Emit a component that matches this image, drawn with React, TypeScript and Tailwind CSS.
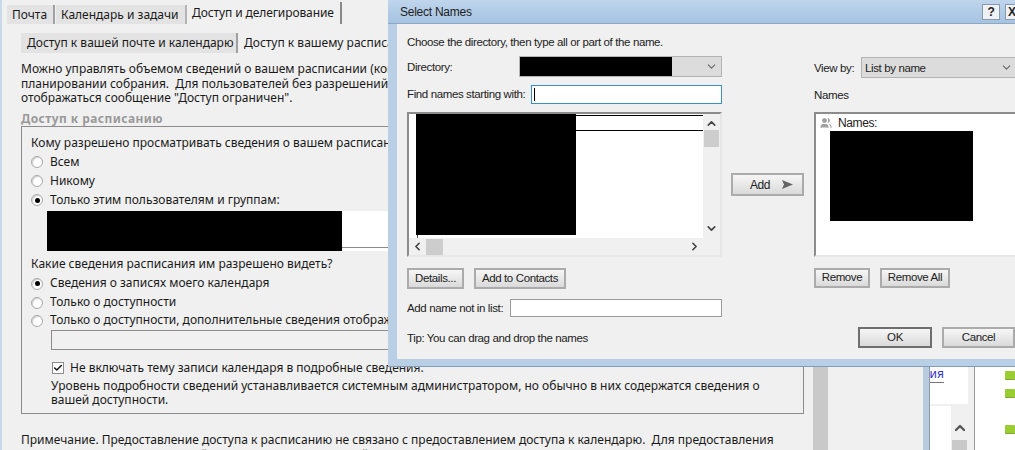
import { Check, ChevronDown, ChevronLeft, ChevronRight, ChevronUp, Users } from 'lucide-react';

const tahoma = "font-['Noto_Sans',sans-serif] text-[12px] leading-[14.5px] text-[#1a1a1a]";
const btnFrame = 'flex items-center justify-center border-2 border-[#ababab] bg-gradient-to-b from-[#f6f6f6] to-[#dadada] text-[#222]';
const dlgBtn = `h-[21px] ${btnFrame}`;
const clipGroup = 'w-[357px] overflow-hidden';
const clipTop = 'w-[367px] overflow-hidden';

function Radio({ on = false }: { on?: boolean }) {
    return (
        <span className="w-[12px] h-[12px] shrink-0 rounded-full border border-[#a8a8a8] bg-white shadow-[inset_1px_1px_1px_#cfcfcf] flex items-center justify-center">
            {on && <span className="w-[5px] h-[5px] rounded-full bg-black" />}
        </span>
    );
}

function RadioRow({ label, on, className }: { label: string; on?: boolean; className: string }) {
    return (
        <div className={`flex items-center gap-[7px] whitespace-nowrap ${clipGroup} ${className}`}>
            <Radio on={on} />
            <span>{label}</span>
        </div>
    );
}

function OptionsPane() {
    return (
        <div className={`w-[813px] h-[450px] shrink-0 overflow-hidden border-l-2 border-[#c9d9ea] ${tahoma}`}>
            {/* Outer tabs */}
            <div className="flex items-end h-[24px] pl-[5px] whitespace-nowrap">
                <div className="h-[19px] w-[48px] pl-[5px] bg-[#e3e3e3] border-r-2 border-[#a0a0a0] leading-[19px]">Почта</div>
                <div className="h-[19px] w-[131px] pl-[5px] ml-[1px] bg-[#e3e3e3] border-r-2 border-[#b4b4b4] leading-[19px]">Календарь и задачи</div>
                <div className="h-[22px] w-[155px] pl-[5px] leading-[22px] border-r-2 border-[#8a8a8a] tracking-[-0.1px]">Доступ и делегирование</div>
            </div>
            {/* Inner tabs */}
            <div className={`flex mt-[9px] ml-[19px] h-[20px] whitespace-nowrap ${clipTop}`}>
                <div className="w-[217px] shrink-0 pl-[6px] bg-[#e3e3e3] border-r-2 border-[#a0a0a0] leading-[20px]">Доступ к вашей почте и календарю</div>
                <div className="pl-[6px] leading-[20px]">Доступ к вашему расписанию</div>
            </div>
            <div className="ml-[19px] mt-[9px] whitespace-pre">
                <p className={clipTop}>Можно управлять объемом сведений о вашем расписании (когда вы заняты или свободны), которые видят другие при</p>
                <p className={clipTop}>планировании собрания.  Для пользователей без разрешений просмотра вашего расписания будет</p>
                <p className={clipTop}>отображаться сообщение "Доступ ограничен".</p>
            </div>
            <div className="ml-[19px] mt-[6px] font-bold text-[#9a9a9a] tracking-[0.42px]">Доступ к расписанию</div>
            {/* Group box */}
            <div className="ml-[19px] w-[783px] h-[288px] border border-[#8c8c8c] pl-[9px] pt-[9px] whitespace-nowrap">
                <p className={clipGroup}>Кому разрешено просматривать сведения о вашем расписании:</p>
                <RadioRow label="Всем" className="mt-[4px] h-[15px]" />
                <RadioRow label="Никому" className="mt-[4px] h-[15px]" />
                <RadioRow label="Только этим пользователям и группам:" on className="mt-[4px] h-[15px]" />
                <div className="flex mt-[3px] ml-[16px] w-[341px] h-[40px] bg-white">
                    <div className="w-[295px] bg-black" />
                    <div className="flex-1 h-[37px] border-b border-[#8c8c8c]" />
                </div>
                <p className={`mt-[6px] ${clipGroup}`}>Какие сведения расписания им разрешено видеть?</p>
                <RadioRow label="Сведения о записях моего календаря" on className="mt-[5px] h-[15px]" />
                <RadioRow label="Только о доступности" className="mt-[4px] h-[15px]" />
                <RadioRow label="Только о доступности, дополнительные сведения отображаются" className="mt-[3px] h-[15px]" />
                <div className="ml-[20px] mt-[2px] w-[337px] h-[20px] border border-r-0 border-[#8c8c8c]" />
                <div className="flex items-center gap-[6px] ml-[21px] mt-[11px] h-[14px]">
                    <span className="w-[12px] h-[12px] border border-[#8c8c8c] bg-white flex items-center justify-center">
                        <Check size={10} strokeWidth={3.5} color="#111" />
                    </span>
                    <span>Не включать тему записи календаря в подробные сведения.</span>
                </div>
                <p className="ml-[20px] mt-[4px] leading-[14px]">Уровень подробности сведений устанавливается системным администратором, но обычно в них содержатся сведения о</p>
                <p className="ml-[20px] leading-[14px]">вашей доступности.</p>
            </div>
            <div className="ml-[19px] mt-[19px] whitespace-pre h-[19px] overflow-hidden">
                <p>Примечание. Предоставление доступа к расписанию не связано с предоставлением доступа к календарю.  Для предоставления</p>
                <p>доступа к календарю используйте вкладку "Доступ к вашей почте и календарю".</p>
            </div>
        </div>
    );
}

function BackgroundRight() {
    return (
        <div className="flex-1 flex h-[450px] pt-[367px] overflow-hidden">
            <div className="w-[15px] bg-[#c9c9c9]" />
            <div className="w-[96px]" />
            <div className="w-[7px] bg-[#b9cbdd] border-r border-[#8a9aaa]" />
            <div className="w-[45px] flex flex-col">
                <div className="h-[43px] w-[38px] bg-white font-['Noto_Sans',sans-serif] text-[12px] leading-[14px]">
                    <span className="text-[#3333cc] border-b border-[#777]">ия</span>
                </div>
                <div className="flex flex-1 mt-[2px]">
                    <div className="w-[21px] bg-white" />
                    <div className="flex-1 flex flex-col items-start pl-[1px] pt-[14px]">
                        <ChevronUp size={16} strokeWidth={3.5} color="#555" />
                        <div className="w-[15px] h-[10px] mt-[4px] bg-[#c9c9c9]" />
                    </div>
                </div>
            </div>
            <div className="flex-1 border-l border-[#9a9a9a] bg-white pl-[30px] pt-[4px]">
                <div className="w-[10px] h-[9px] rounded-[1px] bg-[#9acd32] border-b border-[#7fa82c]" />
                <div className="w-[10px] h-[9px] mt-[9px] rounded-[1px] bg-[#9acd32] border-b border-[#7fa82c]" />
                <div className="w-[10px] h-[9px] mt-[27px] rounded-[1px] bg-[#9acd32] border-b border-[#7fa82c]" />
            </div>
        </div>
    );
}

function NamesTree() {
    return (
        <div className="mt-[9px] h-[145px] border-2 border-[#8c8c8c] border-r-[#e6e6e6] border-b-[#e6e6e6] bg-white flex flex-col">
            <div className="flex flex-1 min-h-0">
                <div className="flex-1 pl-[7px]">
                    <div className="flex h-[121px]">
                        <div className="w-[160px] bg-black" />
                        <div className="flex-1 h-[16px] mt-[1px] border-y border-black" />
                    </div>
                    <div className="ml-[1px] w-px h-[5px] bg-[#555]" />
                </div>
                <div className="w-[17px] bg-[#f0f0f0] flex flex-col items-center">
                    <ChevronUp size={13} strokeWidth={3} color="#444" className="mt-[3px]" />
                    <div className="w-[15px] h-[17px] bg-[#cdcdcd]" />
                    <div className="flex-1" />
                    <ChevronDown size={13} strokeWidth={3} color="#444" className="mb-[3px]" />
                </div>
            </div>
            <div className="h-[17px] bg-[#f0f0f0] flex items-center">
                <ChevronLeft size={13} strokeWidth={3} color="#444" className="ml-[2px]" />
                <div className="w-[17px] h-[16px] ml-[2px] bg-[#cdcdcd]" />
                <div className="flex-1" />
                <ChevronRight size={13} strokeWidth={3} color="#444" className="mr-[19px]" />
            </div>
        </div>
    );
}

function SelectNames() {
    return (
        <div className="absolute left-[388px] top-0 w-[627px] h-[367px] overflow-hidden bg-[#b9cfe6] border-b border-[#7f9db9] font-['Liberation_Sans',sans-serif] text-[11.5px] tracking-[-0.38px] text-[#222]">
            <div className="h-[24px] flex items-center justify-between pl-[12px] bg-gradient-to-b from-[#bfd5ec] to-[#a5c3e2] border-b border-[#8fa8c0]">
                <span className="text-[12px] tracking-[-0.25px]">Select Names</span>
                <div className="flex gap-[5px] w-[33px] overflow-hidden shrink-0">
                    <div className="w-[18px] h-[16px] shrink-0 bg-[#eef2f6] border border-[#8a9aaa] flex items-center justify-center font-bold text-[12px]">?</div>
                    <div className="w-[20px] h-[16px] shrink-0 bg-[#eef2f6] border border-[#8a9aaa] pl-[2px] font-bold text-[12px] leading-[14px]">X</div>
                </div>
            </div>
            <div className="ml-[9px] h-[335px] bg-[#f0f0f0] flex pl-[10px]">
                {/* Left column */}
                <div className="w-[315px] shrink-0 pt-[9px]">
                    <div className="h-[18px] leading-[18px]">Choose the directory, then type all or part of the name.</div>
                    <div className="flex items-center mt-[5px] h-[21px]">
                        <span className="w-[112px] pt-[2px]">Directory:</span>
                        <div className="flex-1 h-[21px] flex items-center bg-[#dcdcdc] border border-[#b4b4b4]">
                            <div className="w-[152px] h-full bg-black" />
                            <div className="flex-1" />
                            <ChevronDown size={13} color="#666" className="mr-[3px]" />
                        </div>
                    </div>
                    <div className="flex items-center justify-between mt-[8px] h-[18px]">
                        <span className="pt-[2px]">Find names starting with:</span>
                        <div className="w-[191px] h-[19px] bg-white border border-[#3b8fc4] flex items-center pl-[2px]">
                            <div className="w-px h-[13px] bg-black" />
                        </div>
                    </div>
                    <NamesTree />
                    <div className="flex gap-[10px] mt-[11px]">
                        <div className={`w-[57px] ${dlgBtn}`}>Details...</div>
                        <div className={`w-[92px] ${dlgBtn}`}>Add to Contacts</div>
                    </div>
                    <div className="flex items-center justify-between mt-[10px] h-[18px]">
                        <span className="pt-[2px]">Add name not in list:</span>
                        <div className="w-[212px] h-[18px] bg-white border border-[#9a9a9a]" />
                    </div>
                    <div className="mt-[14px] leading-[14px]">Tip: You can drag and drop the names</div>
                </div>
                {/* Add column */}
                <div className="w-[92px] shrink-0 pt-[149px] pl-[9px]">
                    <div className={`w-[73px] h-[23px] gap-[12px] pl-[8px] ${btnFrame}`}>
                        <span className="text-[12px]">Add</span>
                        <svg width="11" height="9" viewBox="0 0 11 9"><path d="M0 0 L11 4.5 L0 9 L2 4.5 Z" fill="#666" /></svg>
                    </div>
                </div>
                {/* Right column */}
                <div className="w-[201px] shrink-0 pt-[33px]">
                    <div className="flex items-center h-[21px]">
                        <span className="w-[47px] shrink-0 pt-[2px]">View by:</span>
                        <div className="w-[160px] shrink-0 h-[21px] flex items-center justify-between bg-[#dcdcdc] border border-[#b4b4b4] pl-[3px] pr-[7px]">
                            <span className="pt-[2px]">List by name</span>
                            <ChevronDown size={13} color="#666" />
                        </div>
                    </div>
                    <div className="mt-[9px] h-[16px] leading-[16px]">Names</div>
                    <div className="mt-[9px] h-[145px] border-2 border-[#8c8c8c] border-r-0 border-b-[#e6e6e6] bg-white pl-[14px] pt-[1px]">
                        <div className="flex items-center -ml-[10px] h-[16px] gap-[6px]">
                            <Users size={12} color="#a0a0a0" fill="#a0a0a0" />
                            <span className="text-[12px]">Names:</span>
                        </div>
                        <div className="w-[143px] h-[90px] bg-black" />
                    </div>
                    <div className="flex gap-[10px] mt-[11px]">
                        <div className={`w-[56px] h-[20px] ${btnFrame}`}>Remove</div>
                        <div className={`w-[70px] h-[20px] ${btnFrame}`}>Remove All</div>
                    </div>
                    <div className="flex gap-[10px] mt-[39px] ml-[44px]">
                        <div className={`w-[74px] ${dlgBtn} !border-[#6e6e6e]`}>OK</div>
                        <div className={`w-[73px] ${dlgBtn}`}>Cancel</div>
                    </div>
                </div>
            </div>
        </div>
    );
}

export default function App() {
    return (
        <div className="relative w-[1015px] h-[450px] overflow-hidden bg-[#f0f0f0] flex">
            <OptionsPane />
            <BackgroundRight />
            <SelectNames />
        </div>
    );
}
